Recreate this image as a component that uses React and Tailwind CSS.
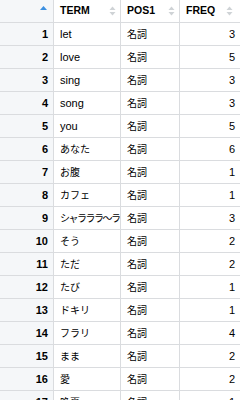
import React from "react";

const rows = [
  ["let", 3], ["love", 5], ["sing", 3], ["song", 3], ["you", 5],
  ["あなた", 6], ["お腹", 1], ["カフェ", 1], ["シャラララ～ラ", 3], ["そう", 2],
  ["ただ", 2], ["たび", 1], ["ドキリ", 1], ["フラリ", 4], ["まま", 2],
  ["愛", 2], ["晩夏", 1],
];

const font = { fontFamily: '"Liberation Sans", "Noto Sans CJK JP", sans-serif' };

// gray up/down sort arrows
const SortIcon = () => (
  <svg width="7" height="10" viewBox="0 0 7 10" className="shrink-0">
    <path d="M3.5 0.5 L6.5 4 L0.5 4 Z" fill="#cfd3d6" />
    <path d="M3.5 9.5 L6.5 6 L0.5 6 Z" fill="#cfd3d6" />
  </svg>
);

const termClass = (term) => {
  if (!/[^\x00-\x7f]/.test(term)) return "text-[11px]";
  if (term.length > 5) return "text-[10px] tracking-[-1.5px]";
  return "text-[10px]";
};

const App = () => {
  return (
    <div className="w-[240px] h-[400px] overflow-hidden bg-white text-black" style={font}>
      {/* header */}
      <div className="flex h-[23px] border-b border-[#dadcdf]">
        <div className="w-[54px] shrink-0 bg-[#f5f7f9] border-r border-[#dadcdf] flex items-start justify-end pr-[6px] pt-[6px]">
          <svg width="7" height="4" viewBox="0 0 7 4">
            <path d="M3.5 0 L7 4 L0 4 Z" fill="#3b8fe0" />
          </svg>
        </div>
        <div className="w-[67px] shrink-0 border-r border-[#dadcdf] flex items-center justify-between pl-[6px] pr-[4px]">
          <span className="text-[10.5px] font-bold">TERM</span>
          <SortIcon />
        </div>
        <div className="w-[59px] shrink-0 border-r border-[#dadcdf] flex items-center justify-between pl-[6px] pr-[4px]">
          <span className="text-[10.5px] font-bold">POS1</span>
          <SortIcon />
        </div>
        <div className="flex-1 flex items-center justify-between pl-[6px] pr-[7px]">
          <span className="text-[10.5px] font-bold">FREQ</span>
          <SortIcon />
        </div>
      </div>

      {/* body rows */}
      {rows.map(([term, freq], i) => (
        <div key={i} className="flex h-[23px] border-b border-[#dadcdf] text-[11px]">
          <div className="w-[54px] shrink-0 bg-[#f5f7f9] border-r border-[#dadcdf] flex items-center justify-end pr-[5px] font-bold">
            {i + 1}
          </div>
          <div className="w-[67px] shrink-0 border-r border-[#dadcdf] flex items-center pl-[6px] whitespace-nowrap overflow-hidden">
            <span className={termClass(term)}>{term}</span>
          </div>
          <div className="w-[59px] shrink-0 border-r border-[#dadcdf] flex items-center pl-[6px] text-[10px]">
            名詞
          </div>
          <div className="flex-1 flex items-center justify-end pr-[5px]">
            {freq}
          </div>
        </div>
      ))}
    </div>
  );
};

export default App;
